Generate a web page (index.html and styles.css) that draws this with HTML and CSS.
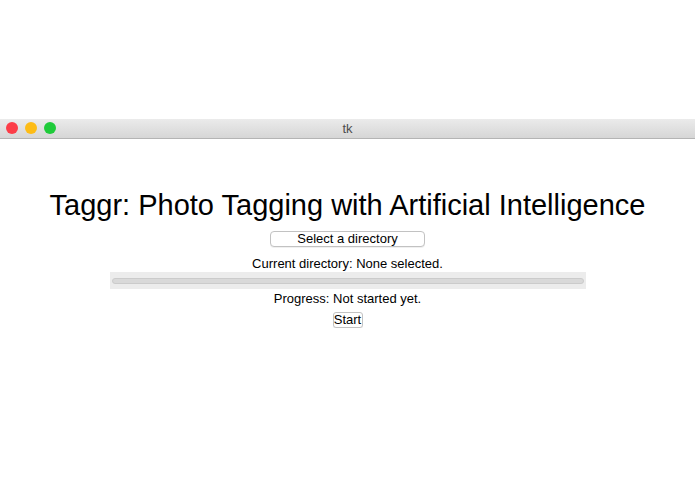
FILE: index.html
```html
<!DOCTYPE html>
<html>
<head>
<meta charset="utf-8">
<link rel="stylesheet" href="styles.css">
</head>
<body>
<div class="top-space"></div>
<div class="titlebar">
  <div class="lights">
    <span class="light red"></span>
    <span class="light yellow"></span>
    <span class="light green"></span>
  </div>
  <div class="wintitle">tk</div>
</div>
<main class="content">
  <h1 class="heading">Taggr: Photo Tagging with Artificial Intelligence</h1>
  <button class="btn btn-wide">Select a directory</button>
  <p class="label label-dir">Current directory: None selected.</p>
  <div class="progress"><div class="progress-track"></div></div>
  <p class="label label-progress">Progress: Not started yet.</p>
  <button class="btn btn-start">Start</button>
</main>
</body>
</html>
```

FILE: styles.css
```css
html, body {
  margin: 0;
  padding: 0;
  background: #ffffff;
  font-family: "Liberation Sans", Arial, sans-serif;
  color: #000;
}
.top-space {
  height: 119px;
}
.titlebar {
  position: relative;
  height: 19px;
  background: linear-gradient(#ebebeb, #d6d6d6);
  border-bottom: 1px solid #b4b4b4;
  display: flex;
  align-items: center;
  justify-content: center;
}
.lights {
  position: absolute;
  left: 6px;
  top: 3px;
  display: flex;
  gap: 7px;
}
.light {
  width: 12px;
  height: 12px;
  border-radius: 50%;
  display: block;
}
.red { background: #fc3d48; }
.yellow { background: #fdbc16; }
.green { background: #1fcb3a; }
.wintitle {
  font-size: 13px;
  color: #4d4d4d;
  line-height: 19px;
}
.content {
  display: flex;
  flex-direction: column;
  align-items: center;
  padding-top: 50px;
}
.heading {
  margin: 0;
  font-weight: normal;
  font-size: 29px;
  line-height: 32px;
  white-space: nowrap;
}
.btn {
  font-family: "Liberation Sans", Arial, sans-serif;
  font-size: 13px;
  line-height: 14px;
  color: #000;
  background: #ffffff;
  border: 1px solid #c2c2c2;
  border-radius: 4px;
  padding: 0;
  box-shadow: 0 1px 0 rgba(0,0,0,0.06);
}
.btn-wide {
  margin-top: 10px;
  width: 155px;
  height: 16px;
}
.label {
  margin: 0;
  font-size: 13px;
  line-height: 16px;
}
.label-dir {
  margin-top: 9px;
}
.progress {
  margin-top: 0;
  width: 476px;
  height: 17px;
  background: #ececec;
  display: flex;
  align-items: center;
  justify-content: center;
  box-sizing: border-box;
  padding: 0 2px;
}
.progress-track {
  flex: 1;
  height: 6px;
  border-radius: 3px;
  background: #d9d9d9;
  border: 1px solid #cbcbcb;
  box-sizing: border-box;
}
.label-progress {
  margin-top: 2px;
}
.btn-start {
  margin-top: 5px;
  width: 30px;
  height: 16px;
  border-radius: 3px;
}
```
